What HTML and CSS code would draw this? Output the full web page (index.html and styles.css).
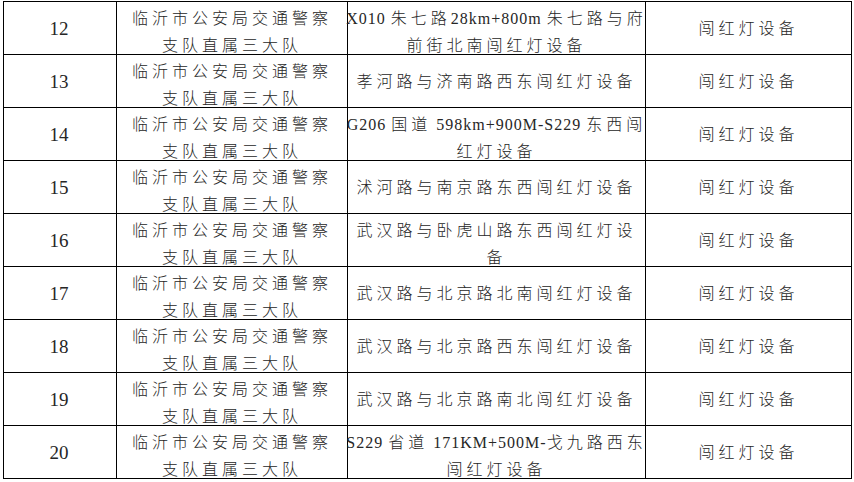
FILE: index.html
```html
<!DOCTYPE html>
<html lang="zh-CN">
<head>
<meta charset="utf-8">
<title>闯红灯设备</title>
<link rel="stylesheet" href="styles.css">
</head>
<body>
<div class="page">
<table class="grid">
  <colgroup>
    <col class="c-no">
    <col class="c-unit">
    <col class="c-loc">
    <col class="c-type">
  </colgroup>
  <tbody>
    <tr>
      <td><div class="cell num">12</div></td>
      <td><div class="cell"><div class="two">临沂市公安局交通警察<br>支队直属三大队</div></div></td>
      <td><div class="cell"><div class="two"><span class="lat">X010 </span>朱七路<span class="lat">28km+800m </span>朱七路与府<br>前街北南闯红灯设备</div></div></td>
      <td><div class="cell">闯红灯设备</div></td>
    </tr>
    <tr>
      <td><div class="cell num">13</div></td>
      <td><div class="cell"><div class="two">临沂市公安局交通警察<br>支队直属三大队</div></div></td>
      <td><div class="cell">孝河路与济南路西东闯红灯设备</div></td>
      <td><div class="cell">闯红灯设备</div></td>
    </tr>
    <tr>
      <td><div class="cell num">14</div></td>
      <td><div class="cell"><div class="two">临沂市公安局交通警察<br>支队直属三大队</div></div></td>
      <td><div class="cell"><div class="two"><span class="lat">G206 </span>国道<span class="lat"> 598km+900M-S229 </span>东西闯<br>红灯设备</div></div></td>
      <td><div class="cell">闯红灯设备</div></td>
    </tr>
    <tr>
      <td><div class="cell num">15</div></td>
      <td><div class="cell"><div class="two">临沂市公安局交通警察<br>支队直属三大队</div></div></td>
      <td><div class="cell">沭河路与南京路东西闯红灯设备</div></td>
      <td><div class="cell">闯红灯设备</div></td>
    </tr>
    <tr>
      <td><div class="cell num">16</div></td>
      <td><div class="cell"><div class="two">临沂市公安局交通警察<br>支队直属三大队</div></div></td>
      <td><div class="cell"><div class="two">武汉路与卧虎山路东西闯红灯设<br>备</div></div></td>
      <td><div class="cell">闯红灯设备</div></td>
    </tr>
    <tr>
      <td><div class="cell num">17</div></td>
      <td><div class="cell"><div class="two">临沂市公安局交通警察<br>支队直属三大队</div></div></td>
      <td><div class="cell">武汉路与北京路北南闯红灯设备</div></td>
      <td><div class="cell">闯红灯设备</div></td>
    </tr>
    <tr>
      <td><div class="cell num">18</div></td>
      <td><div class="cell"><div class="two">临沂市公安局交通警察<br>支队直属三大队</div></div></td>
      <td><div class="cell">武汉路与北京路西东闯红灯设备</div></td>
      <td><div class="cell">闯红灯设备</div></td>
    </tr>
    <tr>
      <td><div class="cell num">19</div></td>
      <td><div class="cell"><div class="two">临沂市公安局交通警察<br>支队直属三大队</div></div></td>
      <td><div class="cell">武汉路与北京路南北闯红灯设备</div></td>
      <td><div class="cell">闯红灯设备</div></td>
    </tr>
    <tr>
      <td><div class="cell num">20</div></td>
      <td><div class="cell"><div class="two">临沂市公安局交通警察<br>支队直属三大队</div></div></td>
      <td><div class="cell"><div class="two"><span class="lat">S229 </span>省道<span class="lat"> 171KM+500M-</span>戈九路西东<br>闯红灯设备</div></div></td>
      <td><div class="cell">闯红灯设备</div></td>
    </tr>
  </tbody>
</table>
</div>
</body>
</html>
```

FILE: styles.css
```css
html, body {
  margin: 0;
  padding: 0;
  background: #ffffff;
}

.page {
  padding: 1px 0 0 3px;
}

.grid {
  border-collapse: collapse;
  table-layout: fixed;
  width: 848px;
  font-family: "Liberation Serif", "Noto Sans CJK SC", serif;
  font-size: 16px;
  font-weight: 300;
  color: #262626;
}

.c-no { width: 113px; }
.c-unit { width: 231px; }
.c-loc { width: 298px; }
.c-type { width: 206px; }

.grid td {
  border: 1px solid #000;
  padding: 0;
  height: 52px;
  vertical-align: middle;
}

.cell {
  height: 52px;
  display: flex;
  align-items: center;
  justify-content: center;
  text-align: center;
  line-height: 27px;
  letter-spacing: 4px;
  white-space: nowrap;
  overflow: visible;
}

.num {
  font-size: 19px;
  letter-spacing: 0;
  padding-right: 2px;
}

.two {
  padding-top: 8px;
  text-align: center;
}

.lat {
  letter-spacing: 1px;
}
```
